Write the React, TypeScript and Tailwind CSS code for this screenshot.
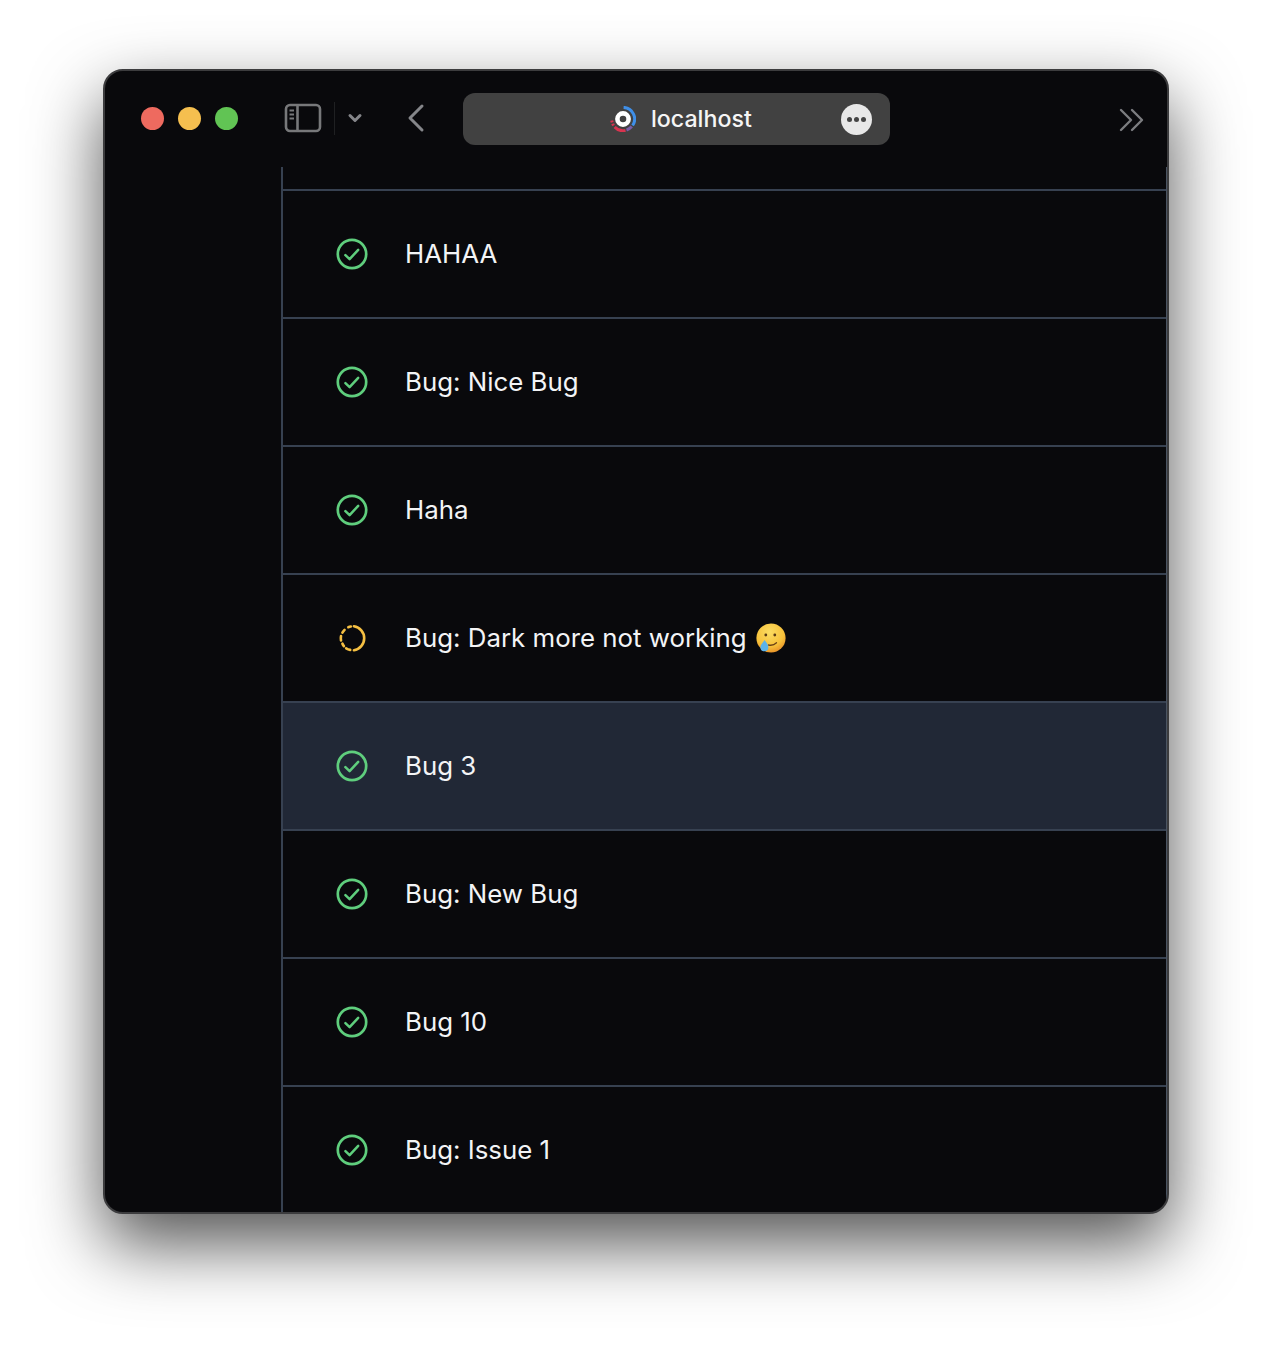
const rows = [
  { title: "HAHAA", status: "done" },
  { title: "Bug: Nice Bug", status: "done" },
  { title: "Haha", status: "done" },
  { title: "Bug: Dark more not working", status: "progress", emoji: true },
  { title: "Bug 3", status: "done", selected: true },
  { title: "Bug: New Bug", status: "done" },
  { title: "Bug 10", status: "done" },
  { title: "Bug: Issue 1", status: "done" },
];

function Check() {
  return (
    <svg width="32" height="32" viewBox="0 0 32 32" fill="none" stroke="#5fce7d" strokeWidth="2.7" strokeLinecap="round" strokeLinejoin="round">
      <circle cx="16" cy="16" r="14.2" />
      <path d="M9.4 17.2l4.2 4 8.6-9.4" strokeWidth="2.5" />
    </svg>
  );
}

function Progress() {
  return (
    <svg className="ml-[2px]" width="32" height="32" viewBox="0 0 32 32" fill="none" stroke="#f5bf42" strokeWidth="2.8" strokeLinecap="round">
      <path d="M17 3.5A12.9 12.9 0 0 1 17 29" />
      <path d="M13 28.7A12.9 12.9 0 0 1 8.7 27" />
      <path d="M6.3 24.7A12.9 12.9 0 0 1 4.7 22" />
      <path d="M3.2 18.7A12.9 12.9 0 0 1 3.2 14" />
      <path d="M4.7 10.3A12.9 12.9 0 0 1 7 7.3" />
      <path d="M11 4.5A12.9 12.9 0 0 1 13.7 3.7" />
    </svg>
  );
}

function Emoji() {
  return (
    <svg width="32" height="32" viewBox="0 0 32 32" fill="none">
      <defs>
        <radialGradient id="face" cx="45%" cy="30%" r="75%">
          <stop offset="0%" stopColor="#fbdc62" />
          <stop offset="65%" stopColor="#f7c13a" />
          <stop offset="100%" stopColor="#e58a26" />
        </radialGradient>
      </defs>
      <circle cx="16" cy="16" r="14.6" fill="url(#face)" />
      <circle cx="10.8" cy="13" r="1.4" fill="#5b3a14" />
      <circle cx="19.8" cy="13" r="1.4" fill="#5b3a14" />
      <path d="M13.5 23c2.8 .6 5.6 .2 8-2.2" stroke="#6b4216" strokeWidth="1.3" strokeLinecap="round" />
      <path d="M9.6 18c1.6 2.6 3.8 4.6 3.8 7.2a4 4 0 0 1-8 0c0-2.6 2.6-4.4 4.2-7.2z" fill="#5cb3ea" />
    </svg>
  );
}

function Logo() {
  return (
    <svg width="26" height="26" viewBox="0 0 26 26" fill="none">
      <circle cx="13" cy="13" r="5.6" stroke="#fff" strokeWidth="4.6" />
      <path d="M13.6 1.4A11.6 11.6 0 0 1 22.6 19.5" stroke="#3f8fe8" strokeWidth="3" />
      <path d="M21.8 20.6A11.6 11.6 0 0 1 16.5 24" stroke="#7a5ea8" strokeWidth="3" />
      <path d="M15.5 24.4A11.6 11.6 0 0 1 4.6 21" stroke="#d8344f" strokeWidth="3" />
      <path d="M3.6 19.5A11.6 11.6 0 0 1 1.8 14.5" stroke="#d8344f" strokeWidth="3" strokeDasharray="2 1.4" />
    </svg>
  );
}

export default function App() {
  return (
    <div className="w-[1272px] h-[1350px] bg-white pt-[69px] pl-[103px] overflow-hidden font-['Inter',sans-serif]">
      <div className="w-[1066px] h-[1145px] rounded-[20px] border-2 border-[#3c3c3e] bg-[#09090c] overflow-hidden flex flex-col shadow-[0_30px_70px_rgba(0,0,0,0.68)]">
        <div className="h-[96px] shrink-0 flex items-center pl-[36px] pr-[22px] pb-[2px]">
          <div className="flex gap-[14px]">
            <span className="w-[23px] h-[23px] rounded-full bg-[#ee6a5f]" />
            <span className="w-[23px] h-[23px] rounded-full bg-[#f5bf4f]" />
            <span className="w-[23px] h-[23px] rounded-full bg-[#61c454]" />
          </div>
          <svg className="ml-[46px]" width="38" height="30" viewBox="0 0 38 30" fill="none" stroke="#77787a" strokeWidth="2.6">
            <rect x="2" y="2" width="34" height="26" rx="4" />
            <path d="M13.5 2v26" />
            <path d="M5.5 7.5h4.5M5.5 11.5h4.5M5.5 15.5h4.5" strokeWidth="2" />
          </svg>
          <span className="ml-[12px] w-px h-[33px] bg-[#1f2022]" />
          <svg className="ml-[12px]" width="16" height="12" viewBox="0 0 16 12" fill="none" stroke="#85868a" strokeWidth="3" strokeLinecap="round" strokeLinejoin="round">
            <path d="M3 3.5l5 5 5-5" />
          </svg>
          <svg className="ml-[43px]" width="20" height="30" viewBox="0 0 20 30" fill="none" stroke="#85868a" strokeWidth="3" strokeLinecap="round" strokeLinejoin="round">
            <path d="M16 3L4 15l12 12" />
          </svg>
          <div className="ml-[37px] mt-[2px] w-[427px] h-[52px] rounded-[12px] bg-[#414141] flex items-center pl-[147px] pr-[18px]">
            <Logo />
            <span className="ml-[15px] mt-[2px] text-[23.2px] text-[#f5f5f5] font-medium leading-none">localhost</span>
            <span className="ml-auto w-[31px] h-[31px] rounded-full bg-[#e8e8e8] flex items-center justify-center gap-[2px]">
              <span className="w-[5px] h-[5px] rounded-full bg-[#444]" />
              <span className="w-[5px] h-[5px] rounded-full bg-[#444]" />
              <span className="w-[5px] h-[5px] rounded-full bg-[#444]" />
            </span>
          </div>
          <svg className="ml-auto mt-[3px]" width="26" height="24" viewBox="0 0 26 24" fill="none" stroke="#7c7d80" strokeWidth="2.4" strokeLinecap="round" strokeLinejoin="round">
            <path d="M2 2l10 10L2 22M13 2l10 10-10 10" />
          </svg>
        </div>
        <div className="flex-1 min-h-0 flex">
          <div className="w-[176px] shrink-0" />
          <div className="flex-1 -mr-px border-l-2 border-r-2 border-l-[#374151] border-r-[#4b5563] flex flex-col">
            <div className="h-[24px] shrink-0 border-b-2 border-[#374151]" />
            {rows.map((r) => (
              <div
                key={r.title}
                className={`h-[128px] shrink-0 flex items-center pl-[53px] border-b-2 border-[#374151] ${r.selected ? "bg-[#212836]" : ""}`}
              >
                <span className="w-[32px] flex justify-center">{r.status === "done" ? <Check /> : <Progress />}</span>
                <span className="ml-[37px] text-[25.85px] text-[#f3f4f6] leading-none">{r.title}</span>
                {r.emoji && <span className="ml-[8px] flex"><Emoji /></span>}
              </div>
            ))}
          </div>
        </div>
      </div>
    </div>
  );
}
